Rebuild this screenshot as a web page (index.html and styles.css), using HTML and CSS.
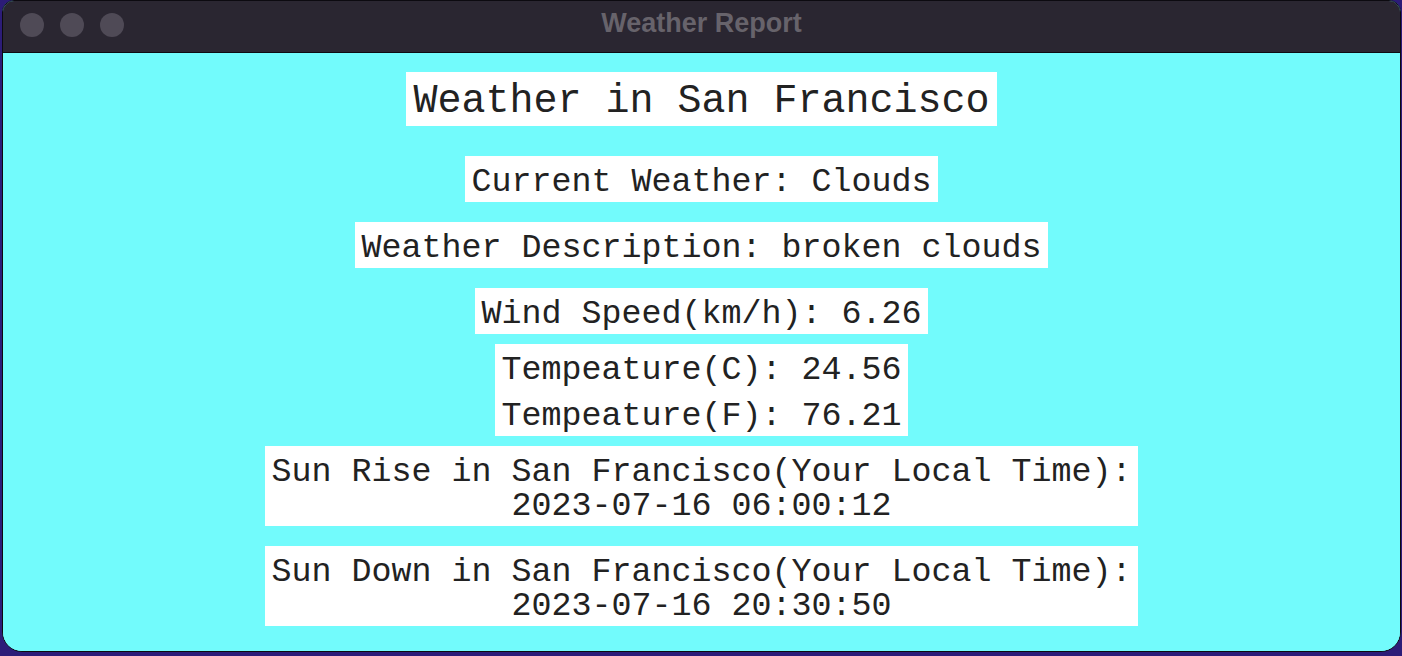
FILE: index.html
```html
<!DOCTYPE html>
<html>
<head>
<meta charset="utf-8">
<title>Weather Report</title>
<link rel="stylesheet" href="styles.css">
</head>
<body>
<div class="window">
  <div class="titlebar">
    <div class="lights">
      <span class="light"></span>
      <span class="light"></span>
      <span class="light"></span>
    </div>
    <div class="title">Weather Report</div>
    <div></div>
  </div>
  <div class="content">
    <div class="lbl lbl-title gap-30">Weather in San Francisco</div>
    <div class="lbl gap-20">Current Weather: Clouds</div>
    <div class="lbl gap-20">Weather Description: broken clouds</div>
    <div class="lbl gap-10">Wind Speed(km/h): 6.26</div>
    <div class="stack gap-10">
      <div class="lbl">Tempeature(C): 24.56</div>
      <div class="lbl">Tempeature(F): 76.21</div>
    </div>
    <div class="lbl gap-20">Sun Rise in San Francisco(Your Local Time):
2023-07-16 06:00:12</div>
    <div class="lbl">Sun Down in San Francisco(Your Local Time):
2023-07-16 20:30:50</div>
  </div>
</div>
</body>
</html>
```
FILE: styles.css
```css
html, body {
  margin: 0;
  padding: 0;
}
body {
  width: 1402px;
  height: 656px;
  background: #2c1c78;
  overflow: hidden;
}
.window {
  margin-left: 2px;
  width: 1399px;
  height: 652px;
  box-sizing: border-box;
  border: 1px solid #0c0a10;
  border-radius: 12px 12px 20px 20px;
  overflow: hidden;
  display: flex;
  flex-direction: column;
  background: #72fbfc;
}
.titlebar {
  height: 52px;
  box-sizing: border-box;
  border-bottom: 1px solid #0e0c12;
  background: #2a2631;
  display: grid;
  grid-template-columns: 1fr auto 1fr;
  align-items: center;
}
.lights {
  display: flex;
  gap: 16px;
  padding-left: 17px;
  padding-bottom: 3px;
}
.light {
  width: 24px;
  height: 24px;
  border-radius: 50%;
  background: #4f4a56;
}
.title {
  font-family: "Liberation Sans", Arial, sans-serif;
  font-weight: bold;
  font-size: 27px;
  color: #67636b;
  padding-bottom: 6px;
}
.content {
  flex: 1;
  background: #72fbfc;
  display: flex;
  flex-direction: column;
  align-items: center;
  padding-top: 19px;
}
.lbl {
  background: #ffffff;
  color: #222222;
  font-family: "Liberation Mono", "Courier New", monospace;
  font-size: 33.333px;
  line-height: 34px;
  padding: 9px 6px 3px;
  white-space: pre;
  text-align: center;
}
.lbl-title {
  font-size: 40px;
  line-height: 42px;
  padding: 9px 7px 3px;
}
.stack {
  display: flex;
  flex-direction: column;
}
.gap-30 { margin-bottom: 30px; }
.gap-20 { margin-bottom: 20px; }
.gap-10 { margin-bottom: 10px; }
```
